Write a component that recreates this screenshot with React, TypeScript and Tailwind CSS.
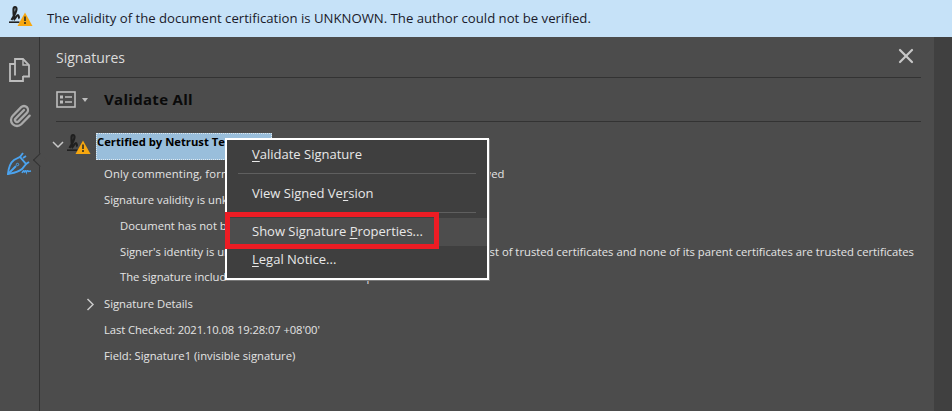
import { Paperclip, X } from 'lucide-react'

const font = { fontFamily: '"Open Sans", "Noto Sans", sans-serif' }

function Sig({ color = '#222' }: { color?: string }) {
  return (
    <svg width="24" height="21" viewBox="0 0 24 21" fill="none">
      <path d="M2.5 14C5 10 7.5 6 7.5 3c0-2.500-3-2.500-3 .5 0 3.500 0 7 1 9.500 1.500-1.500 2-4 3.500-4 1 0 .5 3 1.500 3.500" stroke={color} strokeWidth="2.2" />
      <path d="M0 16.200h10.500" stroke={color} strokeWidth="1.6" />
      <path d="M16 6.500 23.500 20h-15z" fill="#f7a70f" />
      <path d="M16 10.500v4.500M16 16v2" stroke="#3a3320" strokeWidth="1.7" />
    </svg>
  )
}

function Row({ indent, children }: { indent: string; children: React.ReactNode }) {
  return <div className={`flex h-[26px] items-center whitespace-nowrap text-[11.25px] text-[#e4e4e4] ${indent}`}>{children}</div>
}

function MenuItem({ u, rest, pre = '', active = false }: { u: string; rest: string; pre?: string; active?: boolean }) {
  return (
    <div className={`flex items-center pl-[25px] text-[13px] text-[#e8e8e8] ${active ? 'h-[28px] bg-[#4d4d4d]' : 'h-[27px]'}`}>
      <span>{pre}<span className="underline underline-offset-2">{u}</span>{rest}</span>
    </div>
  )
}

export default function App() {
  return (
    <div className="relative flex h-[411px] w-[952px] flex-col overflow-hidden bg-[#4c4c4c]" style={font}>
      <div className="flex h-[37px] shrink-0 items-center bg-[#c6e2f8] pl-[9px] text-[13.17px] text-[#1a1a2a]">
        <span className="-mt-1"><Sig /></span>
        <span className="ml-[14px]">The validity of the document certification is UNKNOWN. The author could not be verified.</span>
      </div>

      <div className="flex min-h-0 flex-1">
        <aside className="relative flex w-[40px] shrink-0 flex-col items-center border-r border-[#333] bg-[#4c4c4c] pt-[21px]">
          <svg width="21" height="24" viewBox="0 0 21 24" fill="none" stroke="#bdbdbd" strokeWidth="1.8">
            <path d="M6 17.500V1h8l6 6v11.500h-6" />
            <path d="M14 1v6h6" strokeWidth="1.4" />
            <path d="M6 6H1v17h13v-5" />
          </svg>
          <Paperclip className="mt-[22px] text-[#a9a9a9]" size={24} strokeWidth={2.3} />
          <svg className="mt-[24px]" width="25" height="23" viewBox="0 0 25 23" fill="none" stroke="#4ba3ef" strokeWidth="1.9">
            <path d="M1 22C1.500 16 3 11 7 8l6-3 6 7-4 5c-4 3.500-9 4-14 5z" />
            <path d="M1 22l8-8M13 5l3-4M16 6l3-2M19 12l3-2" />
            <circle cx="10.500" cy="12.500" r="1.200" strokeWidth="1" />
            <path d="M15 21c1.500-3 2-3 2.500-.5.500-2 1.500-2.500 2-.5.500-1.500 1.500-1.500 2-.5l2.500-.5" strokeWidth="1.500" />
          </svg>
          <span className="absolute left-[34.500px] top-[118px] size-[10px] rotate-45 border-b border-l border-[#333] bg-[#4c4c4c]" />
        </aside>

        <main className="min-w-0 flex-1 pl-[16px] pr-[13px]">
          <div className="flex h-[41px] items-center justify-between border-b border-[#333]">
            <span className="text-[14px] text-[#dcdcdc]">Signatures</span>
            <X className="-mt-[3px] mr-[3px] text-[#c8c8c8]" size={24} strokeWidth={2.2} />
          </div>
          <div className="flex h-[44px] items-center border-b border-[#333]">
            <svg width="20" height="17" viewBox="0 0 20 17" fill="none">
              <rect x="1" y="1" width="18" height="15" stroke="#bdbdbd" strokeWidth="1.600" />
              <path d="M4 4.500h3v3H4zM4 9.500h3v3H4z" fill="#bdbdbd" />
              <path d="M9 6h7M9 11h7" stroke="#bdbdbd" strokeWidth="1.700" />
            </svg>
            <span className="ml-[6px] h-0 w-0 border-x-[3.500px] border-t-[4px] border-x-transparent border-t-[#bdbdbd]" />
            <span className="ml-[16px] text-[15px] font-bold tracking-[0.3px] text-[#0a0a0a]">Validate All</span>
          </div>

          <div className="flex h-[39px] items-start pt-[11px]">
            <svg className="ml-[-4px] mt-[8px]" width="12" height="8" viewBox="0 0 12 8" fill="none" stroke="#c8c8c8" strokeWidth="1.500">
              <path d="M1 1l5 5 5-5" />
            </svg>
            <span className="ml-[3px] mt-[1px]"><Sig color="#1f1f1f" /></span>
            <span className="ml-[5px] h-[27px] w-[176px] overflow-hidden whitespace-nowrap border border-dotted border-[#dfe8ee] bg-[#99bedb] pt-[1px] text-[11.25px] font-bold leading-[14px] text-black">
              Certified by Netrust Tes
            </span>
          </div>

          <Row indent="pl-[48px] tracking-[0.14px]">Only commenting, form fill-in, signing and page adding actions are allowed</Row>
          <Row indent="pl-[48px]">Signature validity is unknown:</Row>
          <Row indent="pl-[64px]">Document has not been modified since this signature was applied</Row>
          <Row indent="pl-[64px]">Signer's identity is unknown because it has not been included in your list of trusted certificates and none of its parent certificates are trusted certificates</Row>
          <Row indent="pl-[64px] pb-[2px]">The signature includes an embedded timestamp</Row>
          <Row indent="pl-[30px]">
            <svg width="9" height="13" viewBox="0 0 9 13" fill="none" stroke="#c8c8c8" strokeWidth="1.500">
              <path d="M1.500 1l5.500 5.500L1.500 12" />
            </svg>
            <span className="ml-[9px]">Signature Details</span>
          </Row>
          <Row indent="pl-[48px] tracking-[-0.1px]">Last Checked: 2021.10.08 19:28:07 +08'00'</Row>
          <Row indent="pl-[48px]">Field: Signature1 (invisible signature)</Row>
        </main>

        <div className="w-[18px] shrink-0 bg-[#404040]" />
      </div>

      <div className="absolute left-[225px] top-[138px] h-[142px] w-[264px] border-2 border-white bg-[#3f3f3f] shadow-[1px_1px_0_#777]">
        <div className="pt-[1px]">
          <MenuItem u="V" rest="alidate Signature" />
          <div className="mx-[11px] mb-[6px] mt-[5px] h-px bg-[#5f5f5f]" />
          <MenuItem pre="View Signed Ve" u="r" rest="sion" />
          <div className="mx-[11px] my-[5px] h-px bg-[#5f5f5f]" />
          <MenuItem pre="Show Signature " u="P" rest="roperties..." active />
          <MenuItem u="L" rest="egal Notice..." />
        </div>
      </div>
      <div className="absolute left-[225px] top-[212px] h-[37px] w-[214px] border-[5px] border-[#ed1c24]" />
    </div>
  )
}
